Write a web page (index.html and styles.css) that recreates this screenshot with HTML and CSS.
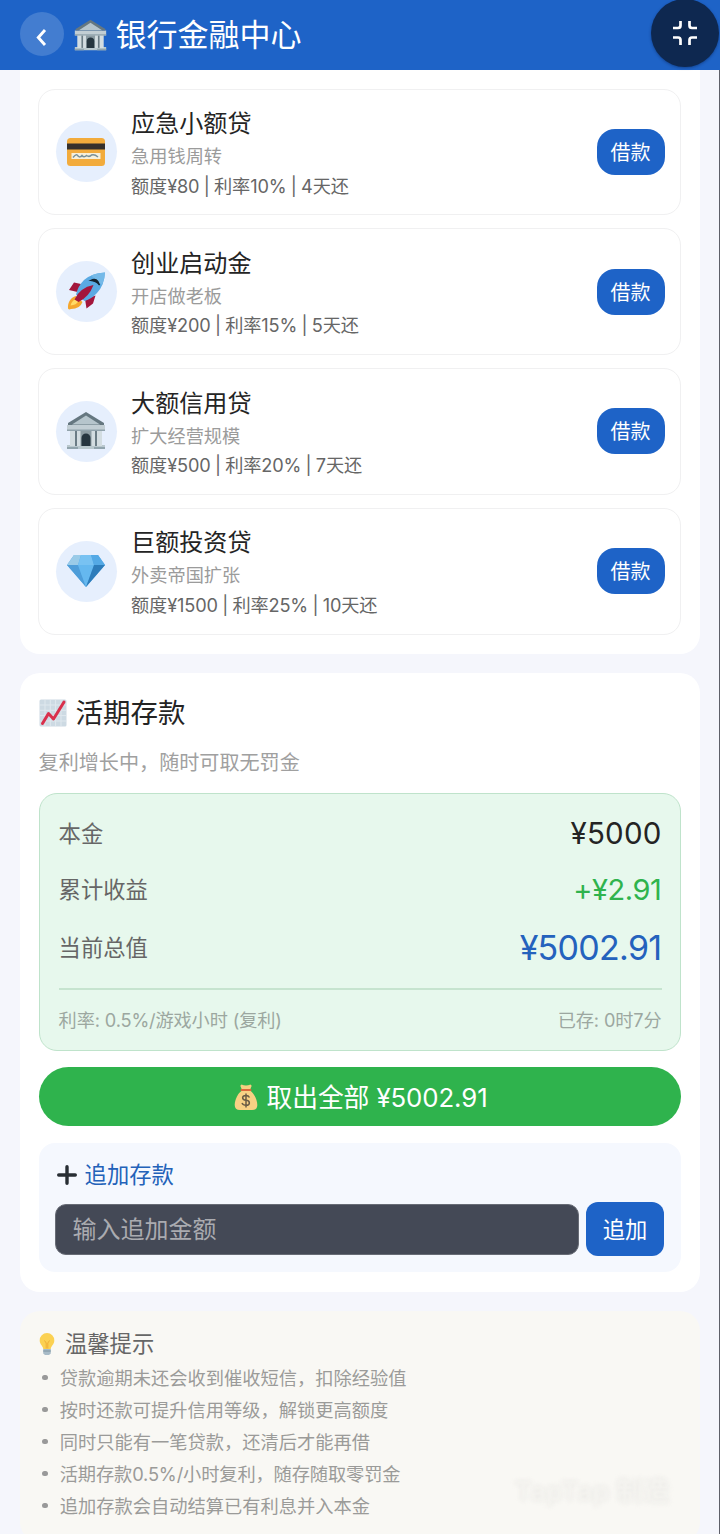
FILE: index.html
```html
<!DOCTYPE html>
<html lang="zh-CN">
<head>
<meta charset="utf-8">
<title>银行金融中心</title>
<link rel="stylesheet" href="styles.css">
</head>
<body>
<svg class="defs" width="0" height="0">
  <symbol id="bank" viewBox="0 0 40 40">
    <path d="M1 34h38v4H1z" fill="#b9c8ce"/>
    <path d="M5 19h30v16H5z" fill="#6b7c85"/>
    <path d="M12 20h16v15H12z" fill="#8c9ca3"/>
    <path d="M15.500 35v-8a4.500 4.500 0 0 1 9 0v8z" fill="#263640"/>
    <path d="M4 19h5v16H4zM11 19h3.500v16H11zM25.500 19H29v16h-3.500zM31 19h5v16h-5z" fill="#d3dde1"/>
    <path d="M1 36h11v2H1zM28 36h11v2H28z" fill="#91a4ad"/>
    <path d="M1 14h38v6H1z" fill="#c2ced4"/>
    <path d="M1 18.500h38V20H1z" fill="#91a3ac"/>
    <path d="M20 1 38 12v2H2v-2z" fill="#657780"/>
    <path d="M20 4.500 34 13.500H6z" fill="#b6c5cc"/>
  </symbol>
</svg>
<div class="app">
  <header class="topbar">
    <button class="back"><svg viewBox="0 0 44 44"><path d="M25 18 18.300 25.500l6.700 7.500" fill="none" stroke="#fff" stroke-width="2.900"/></svg></button>
    <svg class="title-icon"><use href="#bank"/></svg>
    <h1>银行金融中心</h1>
    <div class="shrink"><svg viewBox="0 0 26 26"><path d="M1 8h5q2.500 0 2.500-2.500V1M25 8h-5q-2.500 0-2.500-2.500V1M1 17.500h5q2.500 0 2.500 2.500v5M25 17.500h-5q-2.500 0-2.500 2.500v5" fill="none" stroke="#fff" stroke-width="2.700"/></svg></div>
  </header>
  <main>
    <section class="card loans">
      <article class="loan">
        <div class="avatar"><svg viewBox="0 0 40 40"><rect x="1" y="6" width="38" height="28" rx="3.500" fill="#f2ab3c"/><path d="M1 11.500h38v6H1z" fill="#35302c"/><path d="M5.500 21h29v6H5.500z" fill="#f6f0dc"/><path d="M7 25.500q3.500-4.500 5-1.500 2 2 4-.5 2 2.500 4.500 0 3 2 5-.5 3-1 6.500 2" fill="none" stroke="#789099" stroke-width="1.500"/></svg></div>
        <div class="info"><h3>应急小额贷</h3><p>急用钱周转</p><p class="terms">额度¥80 | 利率10% | 4天还</p></div>
        <button class="borrow">借款</button>
      </article>
      <article class="loan">
        <div class="avatar"><svg viewBox="0 0 40 40"><path d="M15 12 8 10.500 3 18l8.500 2zM19 27l1.500 9.500L27 31.500l2.500-8z" fill="#a3163c"/><path d="M9.500 24C4 26 1.500 31 2 36.500q1 1.500 3 .5 9 0 11.500-7z" fill="#f5a72e"/><path d="M9.500 27q-4 2-5 6.500 6-.5 8-4.500z" fill="#ffdb67"/><path d="M39 .5Q26 1 18 8q-6 6-8 14.500L18.500 29q7-2 12.500-8 7.500-8 8-20.500z" fill="#5aaae3"/><path d="M39 .5Q30 1 25 3.500l11 9.500Q38.500 8 39 .5z" fill="#74b9e8"/><path d="M24.500 8.500q7-3.500 9 4.500-3.500-4-9-4.500z" fill="#14232e" stroke="#14232e" stroke-width="1.200"/><path d="M27.500 13Q14 15.500 8.500 27.500l4 2.500Q23 25 27.500 13z" fill="#a3163c"/></svg></div>
        <div class="info"><h3>创业启动金</h3><p>开店做老板</p><p class="terms">额度¥200 | 利率15% | 5天还</p></div>
        <button class="borrow">借款</button>
      </article>
      <article class="loan">
        <div class="avatar"><svg><use href="#bank"/></svg></div>
        <div class="info"><h3>大额信用贷</h3><p>扩大经营规模</p><p class="terms">额度¥500 | 利率20% | 7天还</p></div>
        <button class="borrow">借款</button>
      </article>
      <article class="loan">
        <div class="avatar"><svg viewBox="0 0 40 40"><path d="M8 4h24l7 10-19 22L1 14z" fill="#55a9e6"/><path d="M8 4 1 14h11l3-10z" fill="#9acbe8"/><path d="M15 4h10l3 10H12z" fill="#78c2f2"/><path d="M25 4h7l7 10H28z" fill="#54a9e5"/><path d="M1 14h11l8 22z" fill="#4d9dd9"/><path d="M12 14h16l-8 22z" fill="#65b8ef"/><path d="M28 14h11L20 36z" fill="#2d7cba"/></svg></div>
        <div class="info"><h3>巨额投资贷</h3><p>外卖帝国扩张</p><p class="terms">额度¥1500 | 利率25% | 10天还</p></div>
        <button class="borrow">借款</button>
      </article>
    </section>

    <section class="card deposit">
      <h2><svg viewBox="0 0 28 28"><rect x=".5" y=".5" width="27" height="27" rx="1.500" fill="#cddae3"/><path d="M6 1v26M11.300 1v26M16.600 1v26M22 1v26M1 6h26M1 11.300h26M1 16.600h26M1 22h26" stroke="#dfe8ee" stroke-width="1"/><path d="m3.500 24.500 6-10 5 5.500L25 3" fill="none" stroke="#d9304c" stroke-width="3" stroke-linecap="round" stroke-linejoin="round"/></svg>活期存款</h2>
      <p class="subtitle">复利增长中，随时可取无罚金</p>
      <div class="balance">
        <div class="row"><span>本金</span><b class="principal">¥5000</b></div>
        <div class="row"><span>累计收益</span><b class="gain">+¥2.91</b></div>
        <div class="row last"><span>当前总值</span><b class="total">¥5002.91</b></div>
        <div class="foot"><span>利率: 0.5%/游戏小时 (复利)</span><span>已存: 0时7分</span></div>
      </div>
      <button class="withdraw"><svg viewBox="0 0 24 28"><path d="M7.500 1.500q4.500 1.800 9 0l1.200 1.200L16 7H8L6.300 2.700z" fill="#f6cf81"/><path d="M8 7.500C4 10 .7 17 .7 22q0 5 5.300 5h12q5.300 0 5.300-5C23.300 17 20 10 16 7.500z" fill="#f8d184"/><path d="M7.500 7h9" stroke="#dc673c" stroke-width="2" stroke-linecap="round"/><path d="M15.500 14.500q-1-2-3.500-2c-4.500 0-4.500 4.500 0 4.800s4.500 5 0 5q-3 0-4-2.300M12 10.500v14" fill="none" stroke="#6a5c45" stroke-width="1.500"/></svg><span>取出全部 ¥5002.91</span></button>
      <div class="add">
        <h4><svg viewBox="0 0 20 20"><path d="M10 1.700v16.600M1.700 10h16.600" stroke="#282e34" stroke-width="3.400" stroke-linecap="round"/></svg>追加存款</h4>
        <div class="form"><div class="field">输入追加金额</div><button>追加</button></div>
      </div>
    </section>

    <section class="tips">
      <h4><svg viewBox="0 0 18 24"><path d="M9 1a7.300 7.300 0 0 0-7.300 7.600c0 4 3.300 5.400 3.500 8.400h7.600c.2-3 3.500-4.400 3.500-8.400A7.300 7.300 0 0 0 9 1z" fill="#fbd152"/><path d="m6.500 8.500 1.700 2.500v5.500m3.300-8L9.800 11v5.500" fill="none" stroke="#f0ad35"/><path d="M5.200 17h7.600v4.500L11 23H7l-1.800-1.500z" fill="#a8bbc7"/><path d="M5.200 19h7.600" stroke="#7d93a1"/></svg>温馨提示</h4>
      <ul>
        <li>贷款逾期未还会收到催收短信，扣除经验值</li>
        <li>按时还款可提升信用等级，解锁更高额度</li>
        <li>同时只能有一笔贷款，还清后才能再借</li>
        <li class="mixed">活期存款0.5%/小时复利，随存随取零罚金</li>
        <li>追加存款会自动结算已有利息并入本金</li>
      </ul>
      <div class="watermark">TapTap 制造</div>
    </section>
  </main>
  <div class="edge"></div>
</div>
</body>
</html>
```
FILE: styles.css
```css
* { box-sizing: border-box; margin: 0; padding: 0; }
body {
  background: #f5f6fc;
  font-family: Inter, "Noto Sans CJK SC", sans-serif;
  color: #242424;
  overflow: hidden;
}
button { border: 0; font-family: inherit; color: #fff; background: #1e63c7; }
h1, h2, h3, h4, b { font-weight: 400; }
svg { display: block; flex: none; }
.defs { position: absolute; }
.app { position: relative; width: 720px; height: 1534px; overflow: hidden; }

.topbar {
  position: relative;
  display: flex;
  align-items: center;
  height: 70px;
  padding: 0 20px;
  background: #1e63c7;
  color: #fff;
}
.back { width: 44px; height: 44px; margin-top: -2px; border-radius: 50%; background: #437dd0; }
.back svg { width: 44px; height: 44px; }
.title-icon { width: 33px; height: 33px; margin: 0 9px 0 10px; }
.topbar h1 { font-size: 31px; line-height: 44px; margin: -1px 0 0 -.5px; }
.shrink {
  position: absolute;
  top: -1px;
  right: 1px;
  display: grid;
  place-items: center;
  width: 68px;
  height: 68px;
  border-radius: 50%;
  background: #0e2850;
  box-shadow: 0 1px 3px rgba(0, 20, 60, .4);
}
.shrink svg { width: 26px; height: 26px; }

main { display: flex; flex-direction: column; gap: 19px; padding: 0 20px; }
.card { background: #fff; border-radius: 20px; }
.loans {
  display: flex;
  flex-direction: column;
  gap: 13.200px;
  height: 584px;
  padding: 18.600px 19px 0 18.400px;
  border-radius: 0 0 20px 20px;
}
.loan {
  display: flex;
  align-items: center;
  height: 126.600px;
  padding: 0 15.500px 0 16.500px;
  border: 1.500px solid #f0f0f1;
  border-radius: 17px;
}
.avatar {
  display: grid;
  place-items: center;
  width: 61px;
  height: 61px;
  border-radius: 50%;
  background: #e6effd;
}
.avatar svg { width: 40px; height: 40px; }
.info { flex: 1; padding-left: 14.200px; margin-top: 1px; }
.info h3 { font-size: 24.100px; line-height: 36px; padding-top: 2px; margin-bottom: -1px; }
.info p { font-size: 18.200px; line-height: 30px; color: #9b9b9b; }
.info .terms { color: #666; margin-top: -.5px; letter-spacing: -.15px; word-spacing: -.6px; }
.borrow { width: 68px; height: 46px; border-radius: 18px; font-size: 20px; padding-bottom: 1px; }

.deposit { height: 619px; padding: 20px 19.500px 0 18.600px; }
.deposit h2 { display: flex; align-items: center; gap: 9px; font-size: 27.500px; line-height: 40px; }
.deposit h2 svg { width: 28px; height: 28px; }
.subtitle { margin-top: 15px; font-size: 20.100px; line-height: 30px; color: #a0a0a0; }
.balance {
  height: 258px;
  margin-top: 15px;
  padding: 11px 18px 0 19px;
  border: 1.500px solid #bfe3cb;
  border-radius: 18px;
  background: #e7f8ed;
}
.row { display: flex; justify-content: space-between; align-items: center; height: 56px; font-size: 22.300px; color: #666; }
.row.last { height: 60px; }
.row span { margin-top: -2px; }
.principal { font-size: 29.500px; letter-spacing: .2px; color: #242424; }
.gain { font-size: 29px; letter-spacing: -.4px; color: #2fb34d; }
.total { font-size: 34px; letter-spacing: -.7px; color: #2462bd; }
.foot {
  display: flex;
  justify-content: space-between;
  margin-top: 10.500px;
  border-top: 2px solid #c6e4cf;
  font-size: 18.200px;
  letter-spacing: -.14px;
  line-height: 60px;
  color: #9ca7a0;
}
.withdraw {
  display: flex;
  align-items: center;
  justify-content: center;
  gap: 9px;
  width: 100%;
  height: 59px;
  margin-top: 16px;
  padding-left: 2px;
  border-radius: 30px;
  background: #2fb34d;
  font-size: 25.800px;
}
.withdraw span { margin-top: -3px; letter-spacing: -.1px; }
.withdraw svg { width: 24px; height: 28px; }
.add { height: 129px; margin-top: 17px; padding: 14px 16.500px 0 16px; border-radius: 16px; background: #f5f8fe; }
.add h4 { display: flex; align-items: center; gap: 8px; font-size: 22.300px; line-height: 36px; color: #2362b9; }
.add h4 svg { width: 20px; height: 20px; margin-left: 2px; }
.form { display: flex; align-items: center; gap: 7.500px; margin-top: 9px; }
.field {
  flex: 1;
  height: 51px;
  padding-left: 17px;
  border: 1px solid #686c76;
  border-radius: 11px;
  background: #444956;
  font-size: 24px;
  line-height: 49px;
  color: #aaabb0;
}
.form button { width: 78px; height: 54px; padding-bottom: 2px; border-radius: 12px; font-size: 22.300px; }

.tips {
  position: relative;
  height: 231px;
  padding: 14px 19px 0 18px;
  border-radius: 20px;
  background: #f9f8f4;
}
.tips h4 { display: flex; align-items: center; gap: 9px; font-size: 22.300px; line-height: 37px; margin-bottom: -1px; color: #666; }
.tips h4 svg { width: 18px; height: 24px; }
.tips ul { list-style: none; }
.tips li { display: flex; align-items: center; height: 32px; font-size: 18.250px; color: #9b9b99; white-space: nowrap; }
.tips li.mixed { letter-spacing: -.14px; }
.tips li::before { content: ""; width: 5.500px; height: 5.500px; margin: 1px 12.200px 0 4px; border-radius: 50%; background: #999; }
.watermark {
  position: absolute;
  right: 30px;
  top: 162px;
  font: 700 27px/38px Inter, "Noto Sans CJK SC", sans-serif;
  color: #f4f3ef;
  text-shadow: 0 0 5px #e8e7e4;
  filter: blur(1px);
}
.edge { position: absolute; top: 70px; right: 0; bottom: 0; width: 1px; background: #5e6069; }
```
